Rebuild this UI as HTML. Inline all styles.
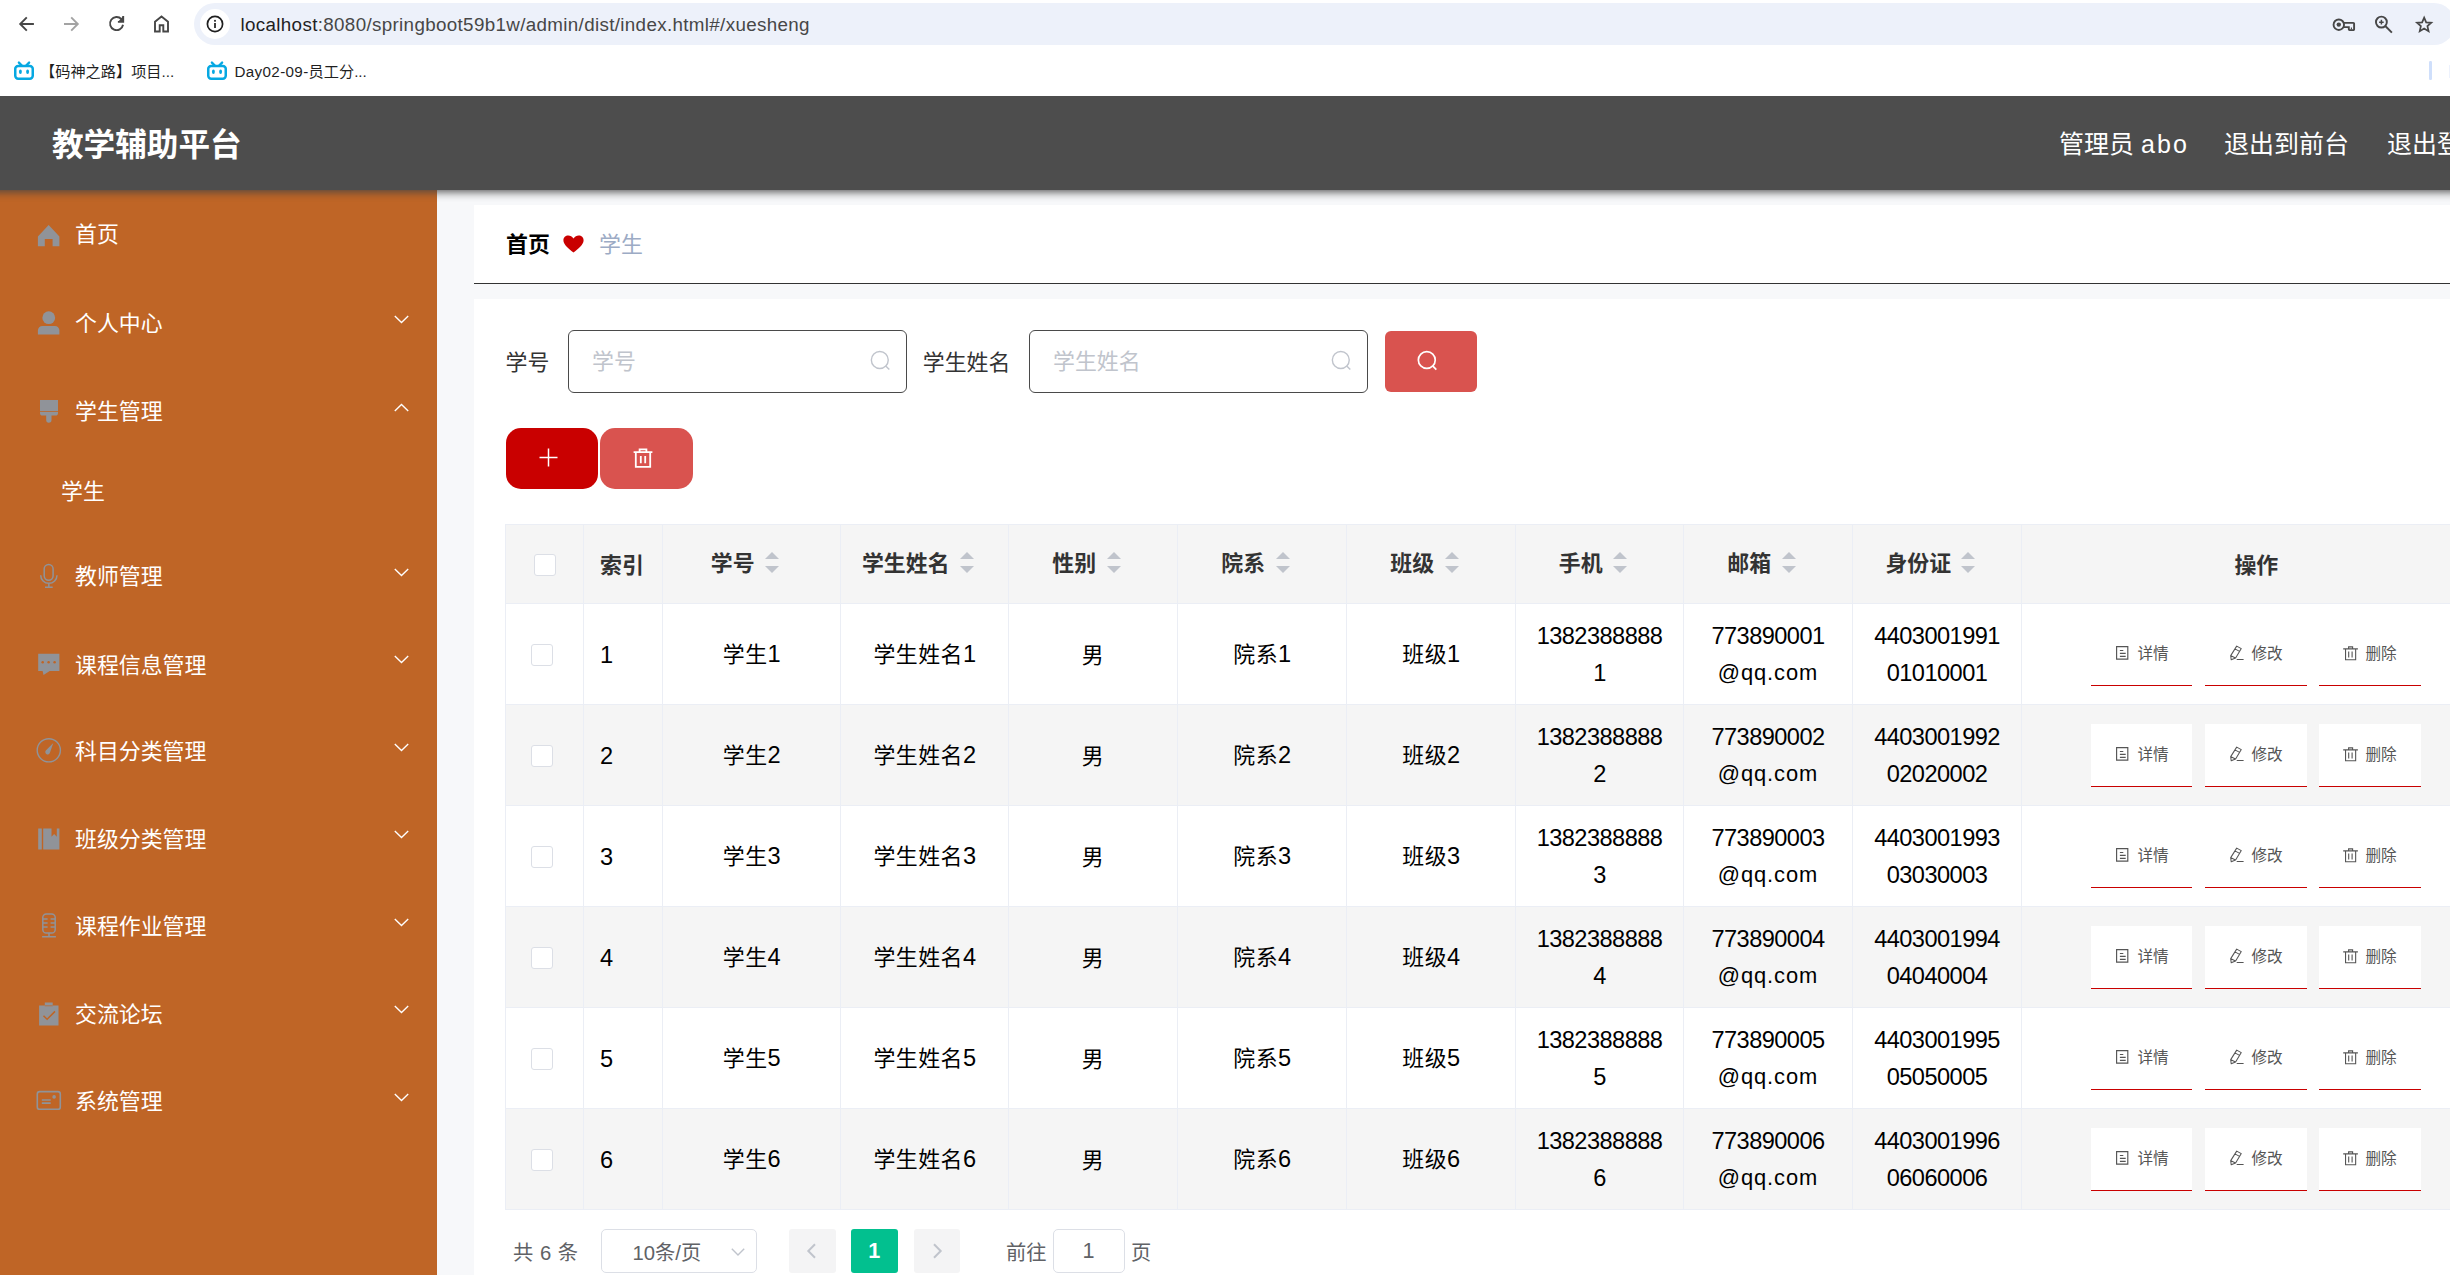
<!DOCTYPE html>
<html lang="zh-CN"><head><meta charset="utf-8"><title>教学辅助平台</title>
<style>
*{box-sizing:border-box}
html,body{margin:0;padding:0}
body{width:2450px;height:1275px;overflow:hidden;position:relative;background:#fff;font-family:"Liberation Sans","Noto Sans CJK SC",sans-serif;color:#000}
.abs{position:absolute}
svg{display:block;overflow:visible}
/* ---------- browser chrome ---------- */
#chrome{position:absolute;left:0;top:0;width:2450px;height:96px;background:#fff}
#urlbar{position:absolute;left:194px;top:3px;width:2261px;height:42px;border-radius:21px;background:#edf1fa}
#urlinfo{position:absolute;left:200px;top:9px;width:30px;height:30px;border-radius:15px;background:#fff}
#urltext{position:absolute;left:240.5px;top:11px;height:28px;line-height:28px;font-size:18.8px;color:#474747;white-space:nowrap;letter-spacing:0.342px}
.bm{position:absolute;top:61.300px;height:22px;line-height:22px;font-size:15.2px;color:#1f1f1f;white-space:nowrap}
/* ---------- app header ---------- */
#hclip{position:absolute;left:0;top:96px;width:2450px;height:1179px;overflow:hidden;z-index:10;pointer-events:none}
#hdr{position:absolute;left:-60px;top:0;width:2600px;height:94px;background:#4d4d4d;box-shadow:0 1.5px 9px #444}
#title{position:absolute;left:112px;top:26px;height:46px;line-height:46px;font-size:31.6px;font-weight:bold;color:#fff;white-space:nowrap}
.hl{position:absolute;top:28px;height:40px;line-height:40px;font-size:25px;color:#fff;white-space:nowrap}
/* ---------- sidebar ---------- */
#side{position:absolute;left:0;top:190px;width:437px;height:1085px;background:#bf6526}
.mi{position:absolute;left:75px;height:40px;line-height:40px;font-size:21.9px;color:#fff;white-space:nowrap}
.ic{position:absolute;left:36px;width:25px;height:25px}
.arr{position:absolute;left:394px;width:15px;height:9px}
/* ---------- main ---------- */
#main{position:absolute;left:437px;top:190px;width:2013px;height:1085px;background:#f7f8fa}
#bc{position:absolute;left:37px;top:15px;width:1990px;height:79px;background:#fff;border-bottom:1px solid #333}
#panel{position:absolute;left:37px;top:109px;width:1990px;height:990px;background:#fff}
.lbl{position:absolute;height:40px;line-height:40px;font-size:21.9px;color:#333;white-space:nowrap}
.inp{position:absolute;top:330px;width:339px;height:63px;border:1px solid #4a4a4a;border-radius:6px;background:#fff}
.ph{position:absolute;left:23px;top:11px;height:40px;line-height:40px;font-size:21.9px;color:#c0c4cc;white-space:nowrap}
.btn{position:absolute;display:block}
/* ---------- table ---------- */
#tbl{position:absolute;left:505px;top:524px;width:1990px;border-top:1px solid #ebeef5;border-left:1px solid #ebeef5}
.tr{position:relative;height:101px;border-bottom:1px solid #ebeef5;display:flex}
.tr.h{height:79px;background:#f5f5f5}
.tr.s{background:#f5f5f5}
.td{position:relative;height:100%;border-right:1px solid #ebeef5;flex:none;display:flex;align-items:center;justify-content:center;text-align:center;font-size:21.9px;line-height:36px;color:#000}
.th{font-weight:bold;color:#333}
.cb{position:absolute;width:22px;height:22px;border:1px solid #dcdfe6;border-radius:3px;background:#fff}
.lat{letter-spacing:0.45px}
.n{font-size:23.6px;letter-spacing:-0.55px}
.lq{letter-spacing:0.9px}
.srt{display:block;position:relative;width:37.5px;height:78px;flex:none}
.srt i{position:absolute;left:10.4px;width:0;height:0;border:7px solid transparent}
.srt i.u{top:20px;border-bottom-color:#c0c4cc}
.srt i.d{top:41px;border-top-color:#c0c4cc}
.ob{position:absolute;top:19px;width:101.5px;height:62.5px;border-bottom:1px solid #c90000;font-size:15.6px;color:#555;line-height:62px;white-space:nowrap}
.tr.s .ob{background:#fff}
/* ---------- pagination ---------- */
.pg{position:absolute;top:1231.500px;height:43.5px;line-height:43.5px;font-size:20.3px;color:#606266;white-space:nowrap}
.pbox{position:absolute;top:1229px;height:44px;border:1px solid #dcdfe6;border-radius:5px;background:#fff}
.pbtn{position:absolute;top:1229px;height:44px;width:46.5px;border-radius:3px;background:#f4f4f5}
</style></head>
<body>
<div id="chrome">
<svg class="abs" style="left:16px;top:13px" width="22" height="22" viewBox="0 0 22 22"><path d="M17.9 11H4.6M10.800 4.300L4.200 11l6.600 6.700" fill="none" stroke="#474747" stroke-width="1.9"/></svg>
<svg class="abs" style="left:60px;top:13px" width="22" height="22" viewBox="0 0 22 22"><path d="M4 11h13.400M11.200 4.300l6.600 6.700-6.600 6.700" fill="none" stroke="#a3a3a3" stroke-width="1.9"/></svg>
<svg class="abs" style="left:105px;top:12px" width="23" height="23" viewBox="0 0 23 23"><path d="M16.4 7.1A6.55 6.55 0 1 0 18.05 12.8" fill="none" stroke="#474747" stroke-width="1.9"/><path d="M18.2 4.1V9.9H12.9" fill="#474747" stroke="#474747" stroke-width="1.9"/></svg>
<svg class="abs" style="left:150px;top:12px" width="23" height="23" viewBox="0 0 23 23"><path d="M5 19.5V9.7l6.500-5.2 6.500 5.2v9.800h-4.700v-6.200H9.700v6.200z" fill="none" stroke="#474747" stroke-width="1.9"/></svg>
<div id="urlbar"></div><div id="urlinfo"></div>
<svg class="abs" style="left:205px;top:14px" width="20" height="20" viewBox="0 0 20 20"><circle cx="10" cy="10" r="7.6" fill="none" stroke="#1f1f1f" stroke-width="1.7"/><rect x="9.15" y="9" width="1.7" height="5" fill="#1f1f1f"/><rect x="9.15" y="5.9" width="1.7" height="1.8" fill="#1f1f1f"/></svg>
<div id="urltext"><span style="color:#1f1f1f">localhost</span>:8080/springboot59b1w/admin/dist/index.html#/xuesheng</div>
<svg class="abs" style="left:2331px;top:15px" width="26" height="18" viewBox="0 0 26 18"><circle cx="7.8" cy="9.7" r="5.25" fill="none" stroke="#474747" stroke-width="1.9"/><circle cx="7.8" cy="9.6" r="2.2" fill="#474747"/><path d="M12.5 7.9H22.3a0.8 0.8 0 0 1 .8 .8V14.3a0.8 0.8 0 0 1 -.8 .8H18.6a0.8 0.8 0 0 1 -.8-.8V12.1H12.6" fill="none" stroke="#474747" stroke-width="1.9"/><path d="M20.4 12.6V14.6" stroke="#474747" stroke-width="1.1"/></svg>
<svg class="abs" style="left:2373px;top:13px" width="22" height="22" viewBox="0 0 22 22"><circle cx="8.4" cy="9.1" r="5.45" fill="none" stroke="#474747" stroke-width="1.9"/><path d="M12.3 13l6.6 6.7" stroke="#474747" stroke-width="1.9"/><path d="M6.1 9.15h4.6M8.4 6.85v4.6" stroke="#474747" stroke-width="1.5"/></svg>
<svg class="abs" style="left:2413px;top:13px" width="22" height="24" viewBox="0 0 22 24"><path d="M11.15 4.60L13.18 9.31L18.28 9.78L14.43 13.17L15.56 18.17L11.15 15.55L6.74 18.17L7.87 13.17L4.02 9.78L9.12 9.31z" fill="none" stroke="#474747" stroke-width="1.75" stroke-linejoin="miter"/></svg>
<svg class="abs" style="left:13px;top:60px" width="23" height="22" viewBox="0 0 23 22"><path d="M5.9 2.6l2.9 2.9M16.100 2.600l-2.900 2.900" stroke="#06a8e2" stroke-width="2.400" stroke-linecap="round"/><rect x="2.250" y="5.950" width="17.500" height="12.800" rx="2.900" fill="none" stroke="#06a8e2" stroke-width="2.500"/><ellipse cx="7.400" cy="11.700" rx="1.450" ry="2.200" fill="#06a8e2"/><ellipse cx="14.600" cy="11.700" rx="1.450" ry="2.200" fill="#06a8e2"/></svg>
<div class="bm" style="left:40px">【码神之路】项目...</div>
<svg class="abs" style="left:205.5px;top:60px" width="23" height="22" viewBox="0 0 23 22"><path d="M5.9 2.6l2.9 2.9M16.100 2.600l-2.900 2.900" stroke="#06a8e2" stroke-width="2.400" stroke-linecap="round"/><rect x="2.250" y="5.950" width="17.500" height="12.800" rx="2.900" fill="none" stroke="#06a8e2" stroke-width="2.500"/><ellipse cx="7.400" cy="11.700" rx="1.450" ry="2.200" fill="#06a8e2"/><ellipse cx="14.600" cy="11.700" rx="1.450" ry="2.200" fill="#06a8e2"/></svg>
<div class="bm" style="left:234.5px"><span style="letter-spacing:0.35px">Day02-09-</span>员工分...</div>
<div class="abs" style="left:2429.300px;top:61px;width:2.500px;height:19px;background:#cfdffb;border-radius:1.200px"></div><div class="abs" style="left:2449px;top:65px;width:1px;height:13px;background:#edf2fd"></div>
</div>
<div id="hclip"><div id="hdr"><div id="title">教学辅助平台</div><div class="hl" style="left:2119px">管理员 <span style="letter-spacing:2.1px">abo</span></div><div class="hl" style="left:2284px">退出到前台</div><div class="hl" style="left:2447px">退出登录</div></div></div>
<div id="side">
<svg class="ic" style="top:32px" viewBox="0 0 25 25"><path d="M12.650 3L23.400 14.500V24.200H16.600V17.100H8.800V24.200H1.900V14.500z" fill="#909399"/></svg><div class="mi" style="top:25px">首页</div>
<svg class="ic" style="top:121.5px" viewBox="0 0 25 25"><circle cx="12.750" cy="5.700" r="6.400" fill="#909399"/><path d="M1.900 22.500v-4c0-2.500 2-4.400 4.500-4.400h12.500c2.500 0 4.500 1.900 4.500 4.400v4z" fill="#909399"/></svg><div class="mi" style="top:114px">个人中心</div><svg class="arr" style="top:124.65px" viewBox="0 0 15 9"><path d="M0.8 0.9l6.7 6.7 6.7-6.7" fill="none" stroke="#fff" stroke-width="1.35"/></svg>
<svg class="ic" style="top:209px" viewBox="0 0 25 25"><path d="M4 1h18v11.200H4z" fill="#909399"/><path d="M4 13h18v1.200c0 1.400-1 2.400-2.400 2.400h-4.100v4.400a2.650 2.650 0 0 1-5.300 0V16.600H6.400C5 16.600 4 15.600 4 14.200z" fill="#909399"/></svg><div class="mi" style="top:202px">学生管理</div><svg class="arr" style="top:213.15px" viewBox="0 0 15 9"><path d="M0.8 8.1l6.7-6.7 6.7 6.7" fill="none" stroke="#fff" stroke-width="1.35"/></svg>
<svg class="ic" style="top:373.5px" viewBox="0 0 25 25"><rect x="8.200" y="0.400" width="8.900" height="15.800" rx="4.450" fill="none" stroke="#909399" stroke-width="1.500"/><path d="M4.700 11.200a8.150 8.150 0 0 0 16.300 0M12.850 19.400v3.600M9 23.300h7.700" fill="none" stroke="#909399" stroke-width="1.500"/></svg><div class="mi" style="top:367.2px">教师管理</div><svg class="arr" style="top:377.65px" viewBox="0 0 15 9"><path d="M0.8 0.9l6.7 6.7 6.7-6.7" fill="none" stroke="#fff" stroke-width="1.35"/></svg>
<svg class="ic" style="top:461.5px" viewBox="0 0 25 25"><path d="M2.200 1.700h21.200V19H13.700L7.500 23 6.600 19H2.200z" fill="#909399"/><circle cx="6.700" cy="10.200" r="1.250" fill="#bf6526"/><circle cx="12.600" cy="10.200" r="1.250" fill="#bf6526"/><circle cx="18.600" cy="10.200" r="1.250" fill="#bf6526"/></svg><div class="mi" style="top:455.5px">课程信息管理</div><svg class="arr" style="top:465.15px" viewBox="0 0 15 9"><path d="M0.8 0.9l6.7 6.7 6.7-6.7" fill="none" stroke="#fff" stroke-width="1.35"/></svg>
<svg class="ic" style="top:549px" viewBox="0 0 25 25"><circle cx="12.800" cy="11.300" r="11.600" fill="none" stroke="#909399" stroke-width="1.400"/><path d="M17.300 4.100L14 13.600a2.400 2.400 0 1 1-4.200-2.100z" fill="#909399"/></svg><div class="mi" style="top:542.3px">科目分类管理</div><svg class="arr" style="top:552.65px" viewBox="0 0 15 9"><path d="M0.8 0.9l6.7 6.7 6.7-6.7" fill="none" stroke="#fff" stroke-width="1.35"/></svg>
<svg class="ic" style="top:636.5px" viewBox="0 0 25 25"><path d="M2.200 1.400h3.600v21H2.200zM7.200 1.400h8.300v8.300l2.650-2.700 2.650 2.700V1.400h2.600v21H7.200z" fill="#909399"/></svg><div class="mi" style="top:630.4px">班级分类管理</div><svg class="arr" style="top:640.15px" viewBox="0 0 15 9"><path d="M0.8 0.9l6.7 6.7 6.7-6.7" fill="none" stroke="#fff" stroke-width="1.35"/></svg>
<svg class="ic" style="top:724px" viewBox="0 0 25 25"><rect x="6.800" y="0" width="12.400" height="19" rx="3.600" fill="none" stroke="#909399" stroke-width="1.500"/><path d="M7 5.100h4.600M7 9h4.600M7 13.100h4.600M14.600 5.100H19M14.600 9H19M14.600 13.100H19M13 19v3.800M6.100 22.800h13.800" fill="none" stroke="#909399" stroke-width="1.500"/></svg><div class="mi" style="top:717px">课程作业管理</div><svg class="arr" style="top:727.65px" viewBox="0 0 15 9"><path d="M0.8 0.9l6.7 6.7 6.7-6.7" fill="none" stroke="#fff" stroke-width="1.35"/></svg>
<svg class="ic" style="top:811.5px" viewBox="0 0 25 25"><path d="M8.800 0.500h7.900v3h5.800v20H3.100v-20h5.700z" fill="#909399"/><path d="M7.500 13.800l3.600 3.500 7.900-7.900" fill="none" stroke="#bf6526" stroke-width="1.500"/><path d="M8.800 3.800h7.900" stroke="#bf6526" stroke-width="0.700"/></svg><div class="mi" style="top:805.4px">交流论坛</div><svg class="arr" style="top:815.15px" viewBox="0 0 15 9"><path d="M0.8 0.9l6.7 6.7 6.7-6.7" fill="none" stroke="#fff" stroke-width="1.35"/></svg>
<svg class="ic" style="top:899px" viewBox="0 0 25 25"><rect x="1.300" y="2.600" width="23" height="17.700" rx="2.400" fill="none" stroke="#909399" stroke-width="1.600"/><path d="M5.800 11h8.900M5.800 14.100h8.900" stroke="#909399" stroke-width="1.700"/><circle cx="18.100" cy="7.900" r="1.800" fill="#909399"/></svg><div class="mi" style="top:891.9px">系统管理</div><svg class="arr" style="top:902.65px" viewBox="0 0 15 9"><path d="M0.8 0.9l6.7 6.7 6.7-6.7" fill="none" stroke="#fff" stroke-width="1.35"/></svg>
<div class="mi" style="left:61px;top:282px">学生</div>
</div>
<div id="main"><div id="bc"></div><div id="panel"></div></div>
<div class="abs" style="left:506px;top:225.300px;height:40px;line-height:40px;font-size:21.9px;font-weight:bold;color:#000;white-space:nowrap">首页</div>
<svg class="abs" style="left:563px;top:234.5px" width="21" height="18" viewBox="0 0 21 18"><path d="M10.5 17.6C6 13.6 0.4 9.8 0.4 5.2 0.4 2.4 2.6 0.4 5.3 0.4c2 0 3.9 1 5.2 3C11.800 1.4 13.7 0.4 15.7 0.4c2.7 0 4.9 2 4.9 4.800 0 4.600-5.600 8.400-10.100 12.400z" fill="#c90000"/></svg>
<div class="abs" style="left:599px;top:225.300px;height:40px;line-height:40px;font-size:21.9px;color:#9cabc5;white-space:nowrap">学生</div>
<div class="lbl" style="left:505.600px;top:342.500px">学号</div>
<div class="inp" style="left:568px"><div class="ph">学号</div></div>
<svg class="abs" style="left:869.5px;top:351px" width="20" height="20" viewBox="0 0 20 20"><circle cx="9.8" cy="9" r="8.45" fill="none" stroke="#c0c4cc" stroke-width="1.4"/><path d="M15.700 14.900l3.600 3.700" stroke="#c0c4cc" stroke-width="1.4" stroke-linecap="butt"/></svg>
<div class="lbl" style="left:922.800px;top:342.500px">学生姓名</div>
<div class="inp" style="left:1029px"><div class="ph">学生姓名</div></div>
<svg class="abs" style="left:1330.5px;top:351px" width="20" height="20" viewBox="0 0 20 20"><circle cx="9.8" cy="9" r="8.45" fill="none" stroke="#c0c4cc" stroke-width="1.4"/><path d="M15.700 14.900l3.600 3.700" stroke="#c0c4cc" stroke-width="1.4" stroke-linecap="butt"/></svg>
<div class="btn" style="left:1385px;top:331px;width:92px;height:61px;border-radius:6px;background:#d9534f"></div>
<svg class="abs" style="left:1416.5px;top:351px" width="20" height="20" viewBox="0 0 20 20"><circle cx="9.8" cy="9" r="8.45" fill="none" stroke="#fff" stroke-width="1.7"/><path d="M15.700 14.900l3.600 3.700" stroke="#fff" stroke-width="1.7" stroke-linecap="butt"/></svg>
<div class="btn" style="left:506px;top:428px;width:92px;height:61px;border-radius:15px;background:#c90000"></div>
<svg class="abs" style="left:539px;top:447.700px" width="19" height="19" viewBox="0 0 19 19"><path d="M9.5 0.5v18M0.5 9.5h18" stroke="#fff" stroke-width="1.500"/></svg>
<div class="btn" style="left:599.500px;top:428px;width:93.500px;height:61px;border-radius:15px;background:#d9534f"></div>
<svg class="abs" style="left:633px;top:447.5px" width="20" height="20" viewBox="0 0 20 20"><path d="M0.6 4.2h18.8M6.6 4v-2.600h6.800v2.600M2.800 4.400v14.400h14.400V4.400M7.800 8v7.200M12.200 8v7.200" fill="none" stroke="#fff" stroke-width="1.8"/></svg>
<div id="tbl">
<div class="tr h"><div class="td th" style="width:78px;"><div class="cb" style="left:28px;top:29px"></div></div><div class="td th" style="width:79px;justify-content:flex-start;padding-left:16px;padding-top:3px">索引</div><div class="td th" style="width:178px;"><span style="position:relative;top:-0.5px">学号</span><span class="srt"><i class="u"></i><i class="d"></i></span></div><div class="td th" style="width:168px;"><span style="position:relative;top:-0.5px">学生姓名</span><span class="srt"><i class="u"></i><i class="d"></i></span></div><div class="td th" style="width:169px;"><span style="position:relative;top:-0.5px">性别</span><span class="srt"><i class="u"></i><i class="d"></i></span></div><div class="td th" style="width:169px;"><span style="position:relative;top:-0.5px">院系</span><span class="srt"><i class="u"></i><i class="d"></i></span></div><div class="td th" style="width:169px;"><span style="position:relative;top:-0.5px">班级</span><span class="srt"><i class="u"></i><i class="d"></i></span></div><div class="td th" style="width:168px;"><span style="position:relative;top:-0.5px">手机</span><span class="srt"><i class="u"></i><i class="d"></i></span></div><div class="td th" style="width:169px;"><span style="position:relative;top:-0.5px">邮箱</span><span class="srt"><i class="u"></i><i class="d"></i></span></div><div class="td th" style="width:169px;"><span style="position:relative;top:-0.5px">身份证</span><span class="srt"><i class="u"></i><i class="d"></i></span></div><div class="td th" style="width:468px;padding-top:3px;padding-left:1.600px">操作</div></div>
<div class="tr"><div class="td" style="width:78px;"><div class="cb" style="left:25px;top:39.500px"></div></div><div class="td lat" style="width:79px;justify-content:flex-start;padding-left:16px;padding-top:2px"><span class="n">1</span></div><div class="td lat" style="width:178px;padding-top:0.8px"><div>学生<span class="n">1</span></div></div><div class="td lat" style="width:168px;padding-top:0.8px"><div>学生姓名<span class="n">1</span></div></div><div class="td lat" style="width:169px;padding-top:3px"><div>男</div></div><div class="td lat" style="width:169px;padding-top:0.8px"><div>院系<span class="n">1</span></div></div><div class="td lat" style="width:169px;padding-top:0.8px"><div>班级<span class="n">1</span></div></div><div class="td lat" style="width:168px;padding-top:1px"><div><span class="n">1382388888</span><br><span class="n">1</span></div></div><div class="td lat" style="width:169px;padding-top:1px"><div><span class="n">773890001</span><br><span class="lq">@qq.com</span></div></div><div class="td lat" style="width:169px;padding-top:1px"><div><span class="n">4403001991</span><br><span class="n">01010001</span></div></div><div class="td" style="width:468px;"><div class="ob" style="left:68.5px;width:101.5px"><svg class="abs" style="left:25.300px;top:23.100px" width="13" height="14" viewBox="0 0 13 14"><path d="M0.600 0.600h11.200v12.500H0.600zM3.900 4.500h3.400M3.900 7.400h5.800M3.900 10.300h5.800" fill="none" stroke="#555" stroke-width="1.150"/></svg><span class="abs" style="left:47px;top:0.300px">详情</span></div><div class="ob" style="left:182.5px;width:102.5px"><svg class="abs" style="left:25px;top:22px" width="15" height="16" viewBox="0 0 15 16"><path d="M6.700 1.100L11.300 3.600 5.600 12.900 1.200 14.800 0.700 10.600zM4.900 3.900L9.600 6.400M0.900 10.700L5.500 13M6.700 14.500H13.600" fill="none" stroke="#555" stroke-width="1.050" stroke-linejoin="round"/></svg><span class="abs" style="left:47px;top:0.300px">修改</span></div><div class="ob" style="left:297px;width:102px"><svg class="abs" style="left:24px;top:22.500px" width="15" height="15" viewBox="0 0 15 15"><path d="M0.200 2.900H14.900M5.600 2.900V0.900h4v2M2.550 3v10.700h10.100V3M5.700 5.600v5.800M9.100 5.600v5.800" fill="none" stroke="#555" stroke-width="1.100"/></svg><span class="abs" style="left:46.5px;top:0.300px">删除</span></div></div></div>
<div class="tr s"><div class="td" style="width:78px;"><div class="cb" style="left:25px;top:39.500px"></div></div><div class="td lat" style="width:79px;justify-content:flex-start;padding-left:16px;padding-top:2px"><span class="n">2</span></div><div class="td lat" style="width:178px;padding-top:0.8px"><div>学生<span class="n">2</span></div></div><div class="td lat" style="width:168px;padding-top:0.8px"><div>学生姓名<span class="n">2</span></div></div><div class="td lat" style="width:169px;padding-top:3px"><div>男</div></div><div class="td lat" style="width:169px;padding-top:0.8px"><div>院系<span class="n">2</span></div></div><div class="td lat" style="width:169px;padding-top:0.8px"><div>班级<span class="n">2</span></div></div><div class="td lat" style="width:168px;padding-top:1px"><div><span class="n">1382388888</span><br><span class="n">2</span></div></div><div class="td lat" style="width:169px;padding-top:1px"><div><span class="n">773890002</span><br><span class="lq">@qq.com</span></div></div><div class="td lat" style="width:169px;padding-top:1px"><div><span class="n">4403001992</span><br><span class="n">02020002</span></div></div><div class="td" style="width:468px;"><div class="ob" style="left:68.5px;width:101.5px"><svg class="abs" style="left:25.300px;top:23.100px" width="13" height="14" viewBox="0 0 13 14"><path d="M0.600 0.600h11.200v12.500H0.600zM3.900 4.500h3.400M3.900 7.400h5.800M3.900 10.300h5.800" fill="none" stroke="#555" stroke-width="1.150"/></svg><span class="abs" style="left:47px;top:0.300px">详情</span></div><div class="ob" style="left:182.5px;width:102.5px"><svg class="abs" style="left:25px;top:22px" width="15" height="16" viewBox="0 0 15 16"><path d="M6.700 1.100L11.300 3.600 5.600 12.900 1.200 14.800 0.700 10.600zM4.900 3.900L9.600 6.400M0.900 10.700L5.500 13M6.700 14.500H13.600" fill="none" stroke="#555" stroke-width="1.050" stroke-linejoin="round"/></svg><span class="abs" style="left:47px;top:0.300px">修改</span></div><div class="ob" style="left:297px;width:102px"><svg class="abs" style="left:24px;top:22.500px" width="15" height="15" viewBox="0 0 15 15"><path d="M0.200 2.900H14.900M5.600 2.900V0.900h4v2M2.550 3v10.700h10.100V3M5.700 5.600v5.800M9.100 5.600v5.800" fill="none" stroke="#555" stroke-width="1.100"/></svg><span class="abs" style="left:46.5px;top:0.300px">删除</span></div></div></div>
<div class="tr"><div class="td" style="width:78px;"><div class="cb" style="left:25px;top:39.500px"></div></div><div class="td lat" style="width:79px;justify-content:flex-start;padding-left:16px;padding-top:2px"><span class="n">3</span></div><div class="td lat" style="width:178px;padding-top:0.8px"><div>学生<span class="n">3</span></div></div><div class="td lat" style="width:168px;padding-top:0.8px"><div>学生姓名<span class="n">3</span></div></div><div class="td lat" style="width:169px;padding-top:3px"><div>男</div></div><div class="td lat" style="width:169px;padding-top:0.8px"><div>院系<span class="n">3</span></div></div><div class="td lat" style="width:169px;padding-top:0.8px"><div>班级<span class="n">3</span></div></div><div class="td lat" style="width:168px;padding-top:1px"><div><span class="n">1382388888</span><br><span class="n">3</span></div></div><div class="td lat" style="width:169px;padding-top:1px"><div><span class="n">773890003</span><br><span class="lq">@qq.com</span></div></div><div class="td lat" style="width:169px;padding-top:1px"><div><span class="n">4403001993</span><br><span class="n">03030003</span></div></div><div class="td" style="width:468px;"><div class="ob" style="left:68.5px;width:101.5px"><svg class="abs" style="left:25.300px;top:23.100px" width="13" height="14" viewBox="0 0 13 14"><path d="M0.600 0.600h11.200v12.500H0.600zM3.900 4.500h3.400M3.900 7.400h5.800M3.900 10.300h5.800" fill="none" stroke="#555" stroke-width="1.150"/></svg><span class="abs" style="left:47px;top:0.300px">详情</span></div><div class="ob" style="left:182.5px;width:102.5px"><svg class="abs" style="left:25px;top:22px" width="15" height="16" viewBox="0 0 15 16"><path d="M6.700 1.100L11.300 3.600 5.600 12.900 1.200 14.800 0.700 10.600zM4.900 3.900L9.600 6.400M0.900 10.700L5.500 13M6.700 14.500H13.600" fill="none" stroke="#555" stroke-width="1.050" stroke-linejoin="round"/></svg><span class="abs" style="left:47px;top:0.300px">修改</span></div><div class="ob" style="left:297px;width:102px"><svg class="abs" style="left:24px;top:22.500px" width="15" height="15" viewBox="0 0 15 15"><path d="M0.200 2.900H14.900M5.600 2.900V0.900h4v2M2.550 3v10.700h10.100V3M5.700 5.600v5.800M9.100 5.600v5.800" fill="none" stroke="#555" stroke-width="1.100"/></svg><span class="abs" style="left:46.5px;top:0.300px">删除</span></div></div></div>
<div class="tr s"><div class="td" style="width:78px;"><div class="cb" style="left:25px;top:39.500px"></div></div><div class="td lat" style="width:79px;justify-content:flex-start;padding-left:16px;padding-top:2px"><span class="n">4</span></div><div class="td lat" style="width:178px;padding-top:0.8px"><div>学生<span class="n">4</span></div></div><div class="td lat" style="width:168px;padding-top:0.8px"><div>学生姓名<span class="n">4</span></div></div><div class="td lat" style="width:169px;padding-top:3px"><div>男</div></div><div class="td lat" style="width:169px;padding-top:0.8px"><div>院系<span class="n">4</span></div></div><div class="td lat" style="width:169px;padding-top:0.8px"><div>班级<span class="n">4</span></div></div><div class="td lat" style="width:168px;padding-top:1px"><div><span class="n">1382388888</span><br><span class="n">4</span></div></div><div class="td lat" style="width:169px;padding-top:1px"><div><span class="n">773890004</span><br><span class="lq">@qq.com</span></div></div><div class="td lat" style="width:169px;padding-top:1px"><div><span class="n">4403001994</span><br><span class="n">04040004</span></div></div><div class="td" style="width:468px;"><div class="ob" style="left:68.5px;width:101.5px"><svg class="abs" style="left:25.300px;top:23.100px" width="13" height="14" viewBox="0 0 13 14"><path d="M0.600 0.600h11.200v12.500H0.600zM3.900 4.500h3.400M3.900 7.400h5.800M3.900 10.300h5.800" fill="none" stroke="#555" stroke-width="1.150"/></svg><span class="abs" style="left:47px;top:0.300px">详情</span></div><div class="ob" style="left:182.5px;width:102.5px"><svg class="abs" style="left:25px;top:22px" width="15" height="16" viewBox="0 0 15 16"><path d="M6.700 1.100L11.300 3.600 5.600 12.900 1.200 14.800 0.700 10.600zM4.900 3.900L9.600 6.400M0.900 10.700L5.500 13M6.700 14.500H13.600" fill="none" stroke="#555" stroke-width="1.050" stroke-linejoin="round"/></svg><span class="abs" style="left:47px;top:0.300px">修改</span></div><div class="ob" style="left:297px;width:102px"><svg class="abs" style="left:24px;top:22.500px" width="15" height="15" viewBox="0 0 15 15"><path d="M0.200 2.900H14.900M5.600 2.900V0.900h4v2M2.550 3v10.700h10.100V3M5.700 5.600v5.800M9.100 5.600v5.800" fill="none" stroke="#555" stroke-width="1.100"/></svg><span class="abs" style="left:46.5px;top:0.300px">删除</span></div></div></div>
<div class="tr"><div class="td" style="width:78px;"><div class="cb" style="left:25px;top:39.500px"></div></div><div class="td lat" style="width:79px;justify-content:flex-start;padding-left:16px;padding-top:2px"><span class="n">5</span></div><div class="td lat" style="width:178px;padding-top:0.8px"><div>学生<span class="n">5</span></div></div><div class="td lat" style="width:168px;padding-top:0.8px"><div>学生姓名<span class="n">5</span></div></div><div class="td lat" style="width:169px;padding-top:3px"><div>男</div></div><div class="td lat" style="width:169px;padding-top:0.8px"><div>院系<span class="n">5</span></div></div><div class="td lat" style="width:169px;padding-top:0.8px"><div>班级<span class="n">5</span></div></div><div class="td lat" style="width:168px;padding-top:1px"><div><span class="n">1382388888</span><br><span class="n">5</span></div></div><div class="td lat" style="width:169px;padding-top:1px"><div><span class="n">773890005</span><br><span class="lq">@qq.com</span></div></div><div class="td lat" style="width:169px;padding-top:1px"><div><span class="n">4403001995</span><br><span class="n">05050005</span></div></div><div class="td" style="width:468px;"><div class="ob" style="left:68.5px;width:101.5px"><svg class="abs" style="left:25.300px;top:23.100px" width="13" height="14" viewBox="0 0 13 14"><path d="M0.600 0.600h11.200v12.500H0.600zM3.900 4.500h3.400M3.900 7.400h5.800M3.900 10.300h5.800" fill="none" stroke="#555" stroke-width="1.150"/></svg><span class="abs" style="left:47px;top:0.300px">详情</span></div><div class="ob" style="left:182.5px;width:102.5px"><svg class="abs" style="left:25px;top:22px" width="15" height="16" viewBox="0 0 15 16"><path d="M6.700 1.100L11.300 3.600 5.600 12.900 1.200 14.800 0.700 10.600zM4.900 3.900L9.600 6.400M0.900 10.700L5.500 13M6.700 14.500H13.600" fill="none" stroke="#555" stroke-width="1.050" stroke-linejoin="round"/></svg><span class="abs" style="left:47px;top:0.300px">修改</span></div><div class="ob" style="left:297px;width:102px"><svg class="abs" style="left:24px;top:22.500px" width="15" height="15" viewBox="0 0 15 15"><path d="M0.200 2.900H14.900M5.600 2.900V0.900h4v2M2.550 3v10.700h10.100V3M5.700 5.600v5.800M9.100 5.600v5.800" fill="none" stroke="#555" stroke-width="1.100"/></svg><span class="abs" style="left:46.5px;top:0.300px">删除</span></div></div></div>
<div class="tr s"><div class="td" style="width:78px;"><div class="cb" style="left:25px;top:39.500px"></div></div><div class="td lat" style="width:79px;justify-content:flex-start;padding-left:16px;padding-top:2px"><span class="n">6</span></div><div class="td lat" style="width:178px;padding-top:0.8px"><div>学生<span class="n">6</span></div></div><div class="td lat" style="width:168px;padding-top:0.8px"><div>学生姓名<span class="n">6</span></div></div><div class="td lat" style="width:169px;padding-top:3px"><div>男</div></div><div class="td lat" style="width:169px;padding-top:0.8px"><div>院系<span class="n">6</span></div></div><div class="td lat" style="width:169px;padding-top:0.8px"><div>班级<span class="n">6</span></div></div><div class="td lat" style="width:168px;padding-top:1px"><div><span class="n">1382388888</span><br><span class="n">6</span></div></div><div class="td lat" style="width:169px;padding-top:1px"><div><span class="n">773890006</span><br><span class="lq">@qq.com</span></div></div><div class="td lat" style="width:169px;padding-top:1px"><div><span class="n">4403001996</span><br><span class="n">06060006</span></div></div><div class="td" style="width:468px;"><div class="ob" style="left:68.5px;width:101.5px"><svg class="abs" style="left:25.300px;top:23.100px" width="13" height="14" viewBox="0 0 13 14"><path d="M0.600 0.600h11.200v12.500H0.600zM3.900 4.500h3.400M3.900 7.400h5.800M3.900 10.300h5.800" fill="none" stroke="#555" stroke-width="1.150"/></svg><span class="abs" style="left:47px;top:0.300px">详情</span></div><div class="ob" style="left:182.5px;width:102.5px"><svg class="abs" style="left:25px;top:22px" width="15" height="16" viewBox="0 0 15 16"><path d="M6.700 1.100L11.300 3.600 5.600 12.900 1.200 14.800 0.700 10.600zM4.900 3.900L9.600 6.400M0.900 10.700L5.500 13M6.700 14.500H13.600" fill="none" stroke="#555" stroke-width="1.050" stroke-linejoin="round"/></svg><span class="abs" style="left:47px;top:0.300px">修改</span></div><div class="ob" style="left:297px;width:102px"><svg class="abs" style="left:24px;top:22.500px" width="15" height="15" viewBox="0 0 15 15"><path d="M0.200 2.900H14.900M5.600 2.900V0.900h4v2M2.550 3v10.700h10.100V3M5.700 5.600v5.800M9.100 5.600v5.800" fill="none" stroke="#555" stroke-width="1.100"/></svg><span class="abs" style="left:46.5px;top:0.300px">删除</span></div></div></div>
</div>
<div class="pg" style="left:513px;word-spacing:1px">共 6 条</div>
<div class="pbox" style="left:601px;width:155.800px"></div><div class="pg" style="left:632.500px">10条/页</div>
<svg class="abs" style="left:731px;top:1247.500px" width="14" height="8" viewBox="0 0 14 8"><path d="M0.8 0.8l6.200 6.200 6.200-6.200" fill="none" stroke="#c0c4cc" stroke-width="1.400"/></svg>
<div class="pbtn" style="left:789px"></div><svg class="abs" style="left:807px;top:1243px" width="9" height="16" viewBox="0 0 9 16"><path d="M8 1.200L1.300 8 8 14.800" fill="none" stroke="#c0c4cc" stroke-width="2"/></svg>
<div class="pbtn" style="left:851px;background:#02c08f"></div><div class="pg" style="left:851px;width:46.500px;text-align:center;color:#fff;font-weight:bold;font-size:21.600px;top:1228.500px">1</div>
<div class="pbtn" style="left:913.500px"></div><svg class="abs" style="left:932.500px;top:1243px" width="9" height="16" viewBox="0 0 9 16"><path d="M1 1.200L7.700 8 1 14.800" fill="none" stroke="#c0c4cc" stroke-width="2"/></svg>
<div class="pg" style="left:1006px">前往</div>
<div class="pbox" style="left:1053px;width:72px"></div><div class="pg" style="left:1052.500px;width:72px;text-align:center;font-size:21.600px;top:1228.500px">1</div>
<div class="pg" style="left:1131px">页</div>
</body></html>
